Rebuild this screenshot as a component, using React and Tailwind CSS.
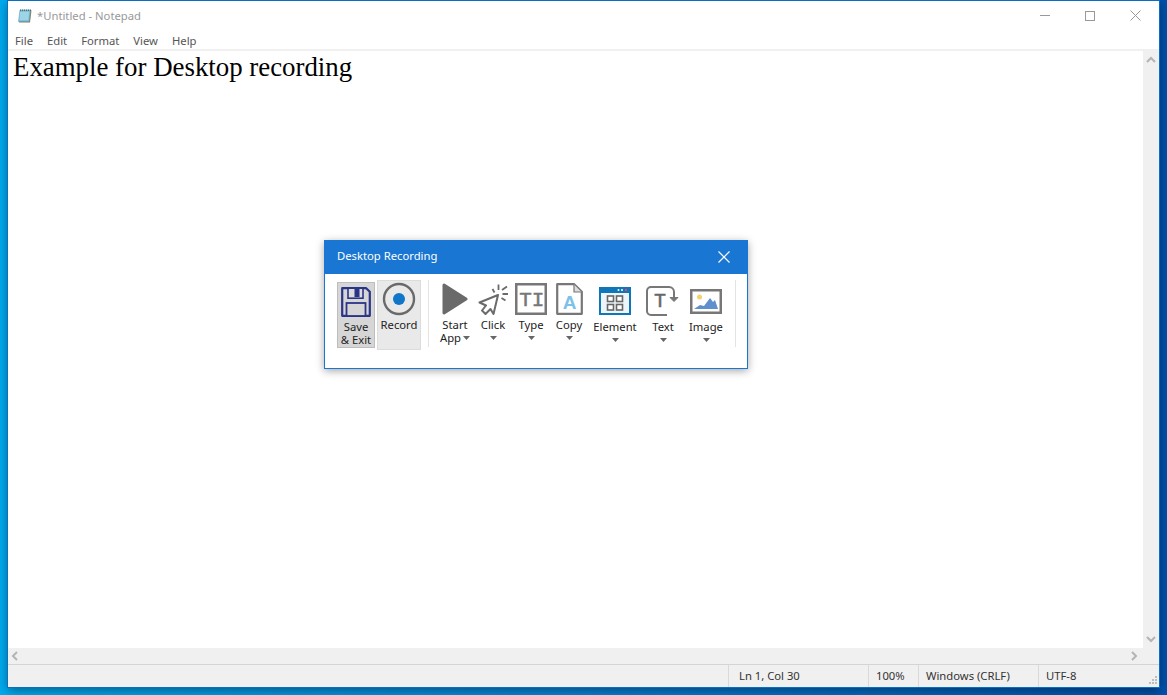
import React from 'react';

const UI_FONT = "font-['Noto_Sans','Open_Sans',sans-serif]";

const Caret = ({ className = '' }) => (
  <svg width="7" height="4" viewBox="0 0 7 4" className={className}>
    <path d="M0 0h7L3.5 4z" fill="#666" />
  </svg>
);

const NotepadIcon = () => (
  <svg width="16" height="16" viewBox="0 0 16 16" className="shrink-0">
    <path d="M3.5 2.5h11l-1.5 12H2z" fill="#8a7d5c" />
    <path d="M3 2h10.5L12 13.5H1.5z" fill="#7cc4dc" stroke="#5d9db8" strokeWidth="0.6" />
    <path d="M3 5h9M2.8 7h9M2.6 9h9M2.4 11h9" stroke="#d4eef6" strokeWidth="0.8" />
    <path d="M3.5 1.5v1.5M5.5 1.5v1.5M7.5 1.5v1.5M9.5 1.5v1.5M11.5 1.5v1.5M13.5 1.5v1.5" stroke="#555" strokeWidth="0.8" />
  </svg>
);

const SaveIcon = () => (
  <svg width="32" height="32" viewBox="0 0 32 32">
    <path d="M2.2 2.2h24l3.6 3.6v24H2.2z" fill="#d6d6d6" stroke="#2a3588" strokeWidth="2.2" strokeLinejoin="round" />
    <rect x="8" y="2.2" width="15" height="10" fill="#dcdcdc" stroke="#2a3588" strokeWidth="1.6" />
    <rect x="14.5" y="3" width="5" height="8" fill="#2a3588" />
    <rect x="6.5" y="17" width="19" height="13" fill="#d6d6d6" stroke="#2a3588" strokeWidth="1.8" />
  </svg>
);

const RecordIcon = () => (
  <svg width="34" height="34" viewBox="0 0 34 34">
    <circle cx="17" cy="17" r="15" fill="none" stroke="#6a6a6a" strokeWidth="2.4" />
    <circle cx="17" cy="17" r="6" fill="#0f76c9" />
  </svg>
);

const PlayIcon = () => (
  <svg width="26" height="32" viewBox="0 0 26 32">
    <path d="M2 2L24 16 2 30z" fill="#6a6a6a" stroke="#6a6a6a" strokeWidth="3" strokeLinejoin="round" />
  </svg>
);

const ClickIcon = () => (
  <svg width="32" height="32" viewBox="0 0 32 32">
    <path d="M21 12L2.5 19.5l6.5 3L5 27.5 8.5 31l5-5 3 5z" fill="#fff" stroke="#6b6b6b" strokeWidth="2" strokeLinejoin="round" />
    <path d="M15.5 6l2 3.5M21.5 1.5V7M30 3.5l-5 3.5M25.5 11H31M24.5 15l4 2.5" stroke="#6b6b6b" strokeWidth="1.8" />
  </svg>
);

const TypeIcon = () => (
  <svg width="32" height="32" viewBox="0 0 32 32">
    <rect x="1.25" y="1.25" width="29.5" height="29.5" fill="#fff" stroke="#777" strokeWidth="2.5" />
    <text x="10.5" y="23" textAnchor="middle" fontFamily="Liberation Mono, monospace" fontSize="21" fill="#777" stroke="#777" strokeWidth="0.5">T</text>
    <text x="23" y="23" textAnchor="middle" fontFamily="Liberation Mono, monospace" fontSize="21" fill="#777" stroke="#777" strokeWidth="0.5">I</text>
  </svg>
);

const CopyIcon = () => (
  <svg width="27" height="32" viewBox="0 0 27 32">
    <path d="M1.2 1.2h17l7.6 7.6v22H1.2z" fill="#fff" stroke="#777" strokeWidth="2.2" strokeLinejoin="round" />
    <path d="M18 1.5v7.5h7.5" fill="#ddd" stroke="#777" strokeWidth="1.2" />
    <text x="13.5" y="26" textAnchor="middle" fontFamily="Liberation Sans, sans-serif" fontWeight="700" fontSize="19" fill="#7cc1e8">A</text>
  </svg>
);

const ElementIcon = () => (
  <svg width="32" height="28" viewBox="0 0 32 28">
    <rect x="1" y="1" width="30" height="26" fill="#eef5fa" stroke="#0f76b8" strokeWidth="2" />
    <rect x="0" y="0" width="32" height="6" fill="#0f76b8" />
    <circle cx="19.5" cy="3" r="1" fill="#fff" />
    <circle cx="23" cy="3" r="1" fill="#fff" />
    <circle cx="27" cy="3" r="1.2" fill="#f0406a" />
    <rect x="8.5" y="9" width="6" height="5.5" fill="#fff" stroke="#666" strokeWidth="1.6" />
    <rect x="17.5" y="9" width="6" height="5.5" fill="#fff" stroke="#666" strokeWidth="1.6" />
    <rect x="8.5" y="17.5" width="6" height="5.5" fill="#fff" stroke="#666" strokeWidth="1.6" />
    <rect x="17.5" y="17.5" width="6" height="5.5" fill="#fff" stroke="#666" strokeWidth="1.6" />
  </svg>
);

const TextIcon = () => (
  <svg width="34" height="30" viewBox="0 0 34 30">
    <path d="M21 29H5A4 4 0 0 1 1 25V5A4 4 0 0 1 5 1H23a5 5 0 0 1 5 5V12" fill="none" stroke="#777" strokeWidth="2" />
    <path d="M24 11.5h8L28 15.5z" fill="#777" stroke="#777" strokeWidth="1" strokeLinejoin="round" />
    <text x="14" y="21" textAnchor="middle" fontFamily="Liberation Mono, monospace" fontSize="20" fill="#666" stroke="#666" strokeWidth="0.5">T</text>
  </svg>
);

const ImageIcon = () => (
  <svg width="32" height="25" viewBox="0 0 32 25">
    <rect x="1.25" y="1.25" width="29.5" height="22.5" fill="#fff" stroke="#777" strokeWidth="2.5" />
    <circle cx="9.5" cy="8" r="2.5" fill="#f0d46a" />
    <path d="M4 20l6-4 4 1 6-8 3 4 2-2 3 9z" fill="#5f8fcd" />
  </svg>
);

const tools = [
  { label: 'Start', second: 'App', width: 'w-[38px]', iconBox: 'h-[32px]', icon: <PlayIcon /> },
  { label: 'Click', width: 'w-[38px]', iconBox: 'h-[32px]', icon: <ClickIcon /> },
  { label: 'Type', width: 'w-[38px]', iconBox: 'h-[32px]', icon: <TypeIcon /> },
  { label: 'Copy', width: 'w-[38px]', iconBox: 'h-[32px]', icon: <CopyIcon /> },
  { label: 'Element', width: 'w-[54px]', iconBox: 'h-[34px] pt-[4px]', icon: <ElementIcon /> },
  { label: 'Text', width: 'w-[42px]', iconBox: 'h-[34px] pt-[3px]', icon: <TextIcon /> },
  { label: 'Image', width: 'w-[44px]', iconBox: 'h-[34px] pt-[6px]', icon: <ImageIcon /> },
];

const ToolButton = ({ tool }) => (
  <div className={`${tool.width} flex flex-col items-center pt-[3px] text-[11.25px] leading-[13px] text-[#222]`}>
    <div className={`${tool.iconBox} flex justify-center`}>{tool.icon}</div>
    <div className="mt-[3px] whitespace-nowrap">{tool.label}</div>
    {tool.second ? (
      <div className="flex items-center gap-[2px] whitespace-nowrap">
        {tool.second}
        <Caret />
      </div>
    ) : (
      <Caret className="mt-[5px]" />
    )}
  </div>
);

const RecordingDialog = () => (
  <div className={`absolute left-[316px] top-[239px] h-[129px] w-[424px] border border-[#1976d2] bg-white shadow-[0_2px_8px_rgba(0,0,0,0.35)] ${UI_FONT}`}>
    <div className="flex h-[33px] items-center justify-between bg-[#1976d2] pb-[2px] pl-[12px] pr-[17px] text-[11.25px] text-white">
      <span>Desktop Recording</span>
      <svg width="12" height="12" viewBox="0 0 12 12">
        <path d="M.5.5l11 11M11.5.5l-11 11" stroke="#fff" strokeWidth="1.2" />
      </svg>
    </div>
    <div className="flex items-start pl-[12px] pt-[6px]">
      <div className="mt-[2px] flex h-[66px] w-[38px] flex-col items-center border border-[#bdbdbd] bg-[#d6d6d6] pt-[3px] text-[11.25px] leading-[13px] text-[#222]">
        <SaveIcon />
        <div className="mt-[2px]">Save</div>
        <div className="whitespace-nowrap">&amp; Exit</div>
      </div>
      <div className="ml-[2px] flex h-[70px] w-[44px] flex-col items-center border border-[#dcdcdc] bg-[#e9e9e9] pt-[1px] text-[11.25px] leading-[13px] text-[#222]">
        <RecordIcon />
        <div className="mt-[2px]">Record</div>
      </div>
      <div className="ml-[7px] h-[67px] w-px bg-[#e4e4e4]" />
      <div className="ml-[7px] flex">
        {tools.map((tool) => (
          <ToolButton key={tool.label} tool={tool} />
        ))}
      </div>
      <div className="ml-[7px] h-[67px] w-px bg-[#e4e4e4]" />
    </div>
  </div>
);

const Chevron = ({ d }) => (
  <svg width="10" height="10" viewBox="0 0 10 10">
    <path d={d} fill="none" stroke="#b4b4b4" strokeWidth="2" />
  </svg>
);

const StatusCell = ({ width, children }) => (
  <div className={`${width} flex h-full items-center border-l border-[#d9d9d9] pl-[7px] text-[11.25px] text-[#333]`}>
    {children}
  </div>
);

const App = () => {
  return (
    <div className="h-[695px] w-[1167px] overflow-hidden bg-linear-to-r from-[#00aaee] via-[#0a80d2] to-[#0050aa] px-[8px] pb-[8px] pt-px">
      <div className="relative flex h-full flex-col bg-white shadow-[0_3px_10px_rgba(0,0,0,0.45)] outline-1 outline-[#0a6fc2]">
        {/* Title bar */}
        <div className={`flex h-[29px] shrink-0 items-center pl-[9px] ${UI_FONT}`}>
          <NotepadIcon />
          <span className="ml-[4px] mt-px text-[11.25px] text-[#999]">*Untitled - Notepad</span>
          <div className="ml-auto flex items-center">
            <div className="h-px w-[10px] bg-[#999]" />
            <div className="ml-[35px] h-[10px] w-[10px] border border-[#999]" />
            <svg width="11" height="11" viewBox="0 0 11 11" className="ml-[35px] mr-[18px]">
              <path d="M.5.5l10 10M10.5.5l-10 10" stroke="#999" strokeWidth="1" />
            </svg>
          </div>
        </div>

        {/* Menu */}
        <div className={`flex h-[19px] shrink-0 items-center pt-[3px] text-[11.25px] text-[#555] ${UI_FONT}`}>
          <span className="ml-[7px]">File</span>
          <span className="ml-[14px]">Edit</span>
          <span className="ml-[14px]">Format</span>
          <span className="ml-[14px]">View</span>
          <span className="ml-[14px]">Help</span>
        </div>
        <div className="h-[2px] shrink-0 bg-[#f0f0f0]" />

        {/* Editor */}
        <div className="flex min-h-0 flex-1">
          <div className="flex-1 pl-[5px] pt-[1px] font-['Liberation_Serif',serif] text-[26.85px] leading-[30px] text-black">
            Example for Desktop recording
          </div>
          <div className="flex w-[16px] flex-col items-center justify-between bg-[#f0f0f0] py-[4px]">
            <Chevron d="M1 7l4-4 4 4" />
            <Chevron d="M1 3l4 4 4-4" />
          </div>
        </div>

        {/* Horizontal scrollbar */}
        <div className="flex h-[16px] shrink-0 items-center justify-between bg-[#f0f0f0] pl-[2px] pr-[20px]">
          <Chevron d="M7 1L3 5l4 4" />
          <Chevron d="M3 1l4 4-4 4" />
        </div>

        {/* Status bar */}
        <div className={`flex h-[23px] shrink-0 items-stretch justify-end border-t border-[#d4d4d4] bg-[#f0f0f0] ${UI_FONT}`}>
          <StatusCell width="w-[140px] pl-[10px]">Ln 1, Col 30</StatusCell>
          <StatusCell width="w-[50px]">100%</StatusCell>
          <StatusCell width="w-[120px]">Windows (CRLF)</StatusCell>
          <StatusCell width="w-[121px] relative">
            UTF-8
            <svg width="10" height="10" viewBox="0 0 10 10" className="absolute bottom-[2px] right-[1px]">
              <path d="M7 1h2v2H7zM4 4h2v2H4zM7 4h2v2H7zM1 7h2v2H1zM4 7h2v2H4zM7 7h2v2H7z" fill="#bdbdbd" />
            </svg>
          </StatusCell>
        </div>

        <RecordingDialog />
      </div>
    </div>
  );
};

export default App;
